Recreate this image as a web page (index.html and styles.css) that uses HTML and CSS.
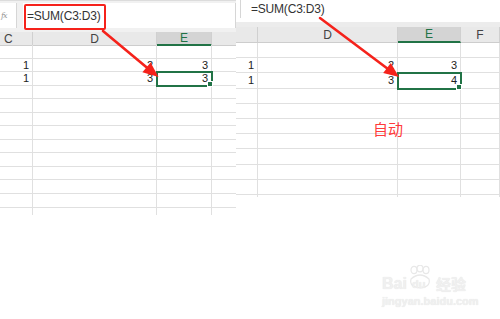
FILE: index.html
```html
<!DOCTYPE html>
<html>
<head>
<meta charset="utf-8">
<link rel="stylesheet" href="styles.css">
</head>
<body>
<div class="shot">
  <section class="panel left">
    <div class="fbar fbar-left">
      <div class="fx">fx</div>
      <div class="finput"><span class="ftext">=SUM(C3:D3)</span></div>
    </div>
    <div class="sheet sheet-left">
      <div class="row head"><div class="c hc hc-first">C</div><div class="c hc">D</div><div class="c hc sel">E</div><div class="c hc"></div></div>
      <div class="row"><div class="c"></div><div class="c"></div><div class="c"></div><div class="c"></div></div>
      <div class="row"><div class="c">1</div><div class="c">2</div><div class="c">3</div><div class="c"></div></div>
      <div class="row"><div class="c">1</div><div class="c">3</div><div class="c active">3</div><div class="c"></div></div>
      <div class="row"><div class="c"></div><div class="c"></div><div class="c"></div><div class="c"></div></div>
      <div class="row"><div class="c"></div><div class="c"></div><div class="c"></div><div class="c"></div></div>
      <div class="row"><div class="c"></div><div class="c"></div><div class="c"></div><div class="c"></div></div>
      <div class="row"><div class="c"></div><div class="c"></div><div class="c"></div><div class="c"></div></div>
      <div class="row"><div class="c"></div><div class="c"></div><div class="c"></div><div class="c"></div></div>
      <div class="row"><div class="c"></div><div class="c"></div><div class="c"></div><div class="c"></div></div>
      <div class="row"><div class="c"></div><div class="c"></div><div class="c"></div><div class="c"></div></div>
      <div class="row"><div class="c"></div><div class="c"></div><div class="c"></div><div class="c"></div></div>
      <div class="row"><div class="c"></div><div class="c"></div><div class="c"></div><div class="c"></div></div>
      <div class="row"><div class="c"></div><div class="c"></div><div class="c"></div><div class="c"></div></div>
    </div>
    <div class="redbox"></div>
  </section>

  <section class="panel right">
    <div class="fbar fbar-right">
      <div class="finput-r">=SUM(C3:D3)</div>
    </div>
    <div class="strip"></div>
    <div class="sheet sheet-right">
      <div class="row head"><div class="c hc"></div><div class="c hc">D</div><div class="c hc sel">E</div><div class="c hc">F</div></div>
      <div class="row"><div class="c"></div><div class="c"></div><div class="c"></div><div class="c"></div></div>
      <div class="row"><div class="c">1</div><div class="c">2</div><div class="c">3</div><div class="c"></div></div>
      <div class="row"><div class="c">1</div><div class="c">3</div><div class="c active">4</div><div class="c"></div></div>
      <div class="row"><div class="c"></div><div class="c"></div><div class="c"></div><div class="c"></div></div>
      <div class="row"><div class="c"></div><div class="c"></div><div class="c"></div><div class="c"></div></div>
      <div class="row"><div class="c"></div><div class="c"></div><div class="c"></div><div class="c"></div></div>
      <div class="row"><div class="c"></div><div class="c"></div><div class="c"></div><div class="c"></div></div>
      <div class="row"><div class="c"></div><div class="c"></div><div class="c"></div><div class="c"></div></div>
      <div class="row"><div class="c"></div><div class="c"></div><div class="c"></div><div class="c"></div></div>
      <div class="row"><div class="c"></div><div class="c"></div><div class="c"></div><div class="c"></div></div>
      <div class="row"><div class="c"></div><div class="c"></div><div class="c"></div><div class="c"></div></div>
      <div class="row"><div class="c"></div><div class="c"></div><div class="c"></div><div class="c"></div></div>
    </div>
  </section>

  <svg class="arrows" width="500" height="319" viewBox="0 0 500 319">
    <line x1="103" y1="31" x2="148" y2="68.5" stroke="#f5221b" stroke-width="2.6" stroke-linecap="round"/>
    <polygon points="158.5,77 142.4,72.2 150.6,62.6" fill="#f5221b"/>
    <line x1="320" y1="18" x2="388" y2="69" stroke="#f5221b" stroke-width="2.6" stroke-linecap="round"/>
    <polygon points="399,77 383.2,73 390.8,63" fill="#f5221b"/>
  </svg>

  <div class="note">自动</div>

  <div class="watermark">
    <div class="wm-top">
      <span class="wm-bai">Bai</span>
      <span class="wm-paw">
        <svg width="26" height="24" viewBox="0 0 26 24">
          <g fill="none" stroke="#e8e8e8" stroke-width="1.2">
            <ellipse cx="7" cy="5" rx="3" ry="3.6"/>
            <ellipse cx="13" cy="3.5" rx="3" ry="3.3"/>
            <ellipse cx="19" cy="5" rx="3" ry="3.6"/>
            <path d="M4 14 Q13 6 22 14 Q24 22 13 23 Q2 22 4 14 Z"/>
          </g>
        </svg>
        <span class="wm-du">du</span>
      </span>
      <span class="wm-jy">经验</span>
    </div>
    <div class="wm-url">jingyan.baidu.com</div>
  </div>
</div>
</body>
</html>
```

FILE: styles.css
```css
* { box-sizing: border-box; }

body {
  margin: 0;
  background: #fff;
  font-family: "Liberation Sans", Arial, sans-serif;
  color: #222;
}

.shot {
  position: relative;
  width: 500px;
  height: 319px;
  overflow: hidden;
  display: flex;
  align-items: flex-start;
}

.panel {
  position: relative;
  display: flex;
  flex-direction: column;
}

.left { width: 236px; }
.right { width: 264px; }

/* formula bars */
.fbar-left {
  height: 32px;
  display: flex;
  gap: 6px;
  padding: 2px 0 4px 0;
  background: #f1f1f1;
  border-top: 1px solid #dcdcdc;
}

.fx {
  width: 17px;
  background: #fff;
  border-right: 1px solid #d6d6d6;
  color: #999;
  font-family: "DejaVu Serif", serif;
  font-style: italic;
  font-size: 8px;
  display: flex;
  align-items: center;
  padding-left: 1px;
  letter-spacing: -1px;
}

.finput {
  flex: 1;
  background: #fff;
  border-right: 1px solid #d6d6d6;
  display: flex;
  align-items: center;
  padding-left: 4px;
}

.ftext, .finput-r {
  font-size: 12px;
  color: #333;
  letter-spacing: -0.2px;
}

.fbar-right {
  height: 22px;
  display: flex;
  padding-left: 4px;
  background: #fff;
}

.finput-r {
  flex: 1;
  border-left: 1px solid #d6d6d6;
  height: 18px;
  padding-left: 10px;
  padding-top: 3px;
  line-height: 12px;
}

.strip {
  height: 5px;
  background: #ececec;
}

/* sheets */
.sheet {
  display: flex;
  flex-direction: column;
  overflow: hidden;
}

.sheet-left { height: 183px; }
.sheet-right { height: 170px; }

.row {
  display: grid;
  flex: none;
}

.sheet-left .row { grid-template-columns: 33px 124px 55px 24px; height: 13.55px; }
.sheet-right .row { grid-template-columns: 22px 140px 63px 39px; height: 15.2px; }

.sheet-left .row.head { height: 13px; }
.sheet-right .row.head { height: 16px; }

.c {
  position: relative;
  border-right: 1px solid #e0e0e0;
  border-bottom: 1px solid #e0e0e0;
  font-size: 11px;
  line-height: 12px;
  text-align: right;
  padding-right: 3px;
  display: flex;
  align-items: center;
  justify-content: flex-end;
  color: #222;
}

.row.head .c {
  background: #e9e9e9;
  border-right-color: #d0d0d0;
  border-bottom: 1px solid #cdcdcd;
  justify-content: center;
  padding-right: 0;
  font-size: 12px;
  color: #444;
}

.row.head .hc-first {
  justify-content: flex-start;
  padding-left: 4px;
}

.row.head .c.sel {
  background: #d4d4d4;
  color: #217346;
  border-bottom: 2px solid #217346;
}

.c.active {
  outline: 2px solid #217346;
  outline-offset: -1px;
  z-index: 1;
}

.c.active::after {
  content: "";
  position: absolute;
  right: -2px;
  bottom: -2px;
  width: 4px;
  height: 4px;
  background: #217346;
  border: 1px solid #fff;
  box-sizing: content-box;
}

.sheet-left .c:last-child { border-right: none; }

/* overlays */
.redbox {
  position: absolute;
  left: 24px;
  top: 4px;
  width: 82px;
  height: 26px;
  border: 2px solid #f5221b;
  border-radius: 2px;
}

.arrows {
  position: absolute;
  left: 0;
  top: 0;
  pointer-events: none;
  z-index: 5;
}

.note {
  position: absolute;
  left: 373px;
  top: 120px;
  font-family: "Noto Sans CJK SC", sans-serif;
  font-size: 15px;
  line-height: 18px;
  color: #ff3b3b;
}

.watermark {
  position: absolute;
  left: 382px;
  top: 263px;
  color: #f0f0f0;
  text-shadow: 0 0 1px #e0e0e0;
  display: flex;
  flex-direction: column;
  align-items: flex-start;
}

.wm-top {
  display: flex;
  align-items: flex-end;
  height: 30px;
}

.wm-bai {
  font-family: "Liberation Sans", sans-serif;
  font-weight: bold;
  font-size: 16px;
  line-height: 18px;
}

.wm-paw {
  position: relative;
  width: 26px;
  height: 28px;
  display: flex;
  flex-direction: column;
  align-items: center;
}

.wm-du {
  position: absolute;
  left: 5px;
  top: 13px;
  font-weight: bold;
  font-size: 11px;
  line-height: 12px;
}

.wm-jy {
  font-family: "Noto Sans CJK SC", sans-serif;
  font-size: 15px;
  line-height: 18px;
  font-weight: bold;
  margin-left: 3px;
}

.wm-url {
  font-family: "Liberation Sans", sans-serif;
  font-size: 11px;
  font-weight: bold;
  line-height: 12px;
  margin-top: 2px;
}
```
